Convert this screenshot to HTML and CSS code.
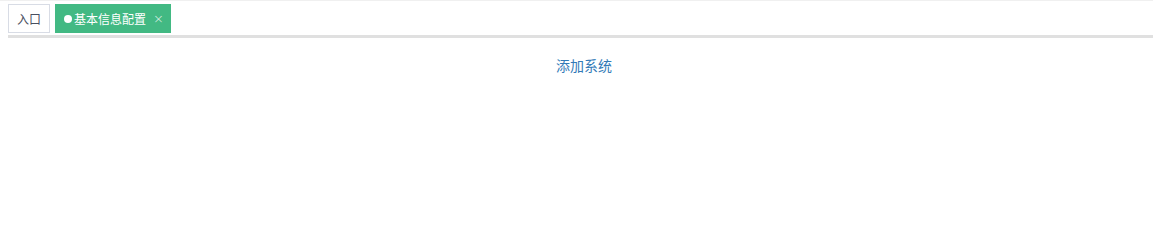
FILE: index.html
```html
<!DOCTYPE html>
<html lang="zh">
  <head>
    <meta charset="UTF-8" />
    <link rel="stylesheet" href="styles.css">
  </head>
  <body>
    <div class="tabs-bar">
      <div class="tabs">
        <span class="tab">入口</span>
        <span class="tab active"><i class="dot"></i>基本信息配置<span class="close">×</span></span>
      </div>
    </div>
    <div class="content">
      <a class="add-link">添加系统</a>
    </div>
  </body>
</html>
```

FILE: styles.css
```css
* {
  box-sizing: border-box;
}

body {
  margin: 0;
  font-family: "Liberation Sans", "Noto Sans CJK SC", sans-serif;
  background: #fff;
}

.tabs-bar {
  border-top: 1px solid #f0f0f0;
  padding: 3px 0 0 8px;
}

.tabs {
  display: flex;
  gap: 5px;
  height: 34px;
  padding-bottom: 2px;
  border-bottom: 3px solid #e0e0e0;
}

.tab {
  display: flex;
  align-items: center;
  height: 29px;
  padding: 0 8px;
  border: 1px solid #d8dce5;
  font-size: 12px;
  color: #495060;
  background: #fff;
}

.tab.active {
  background: #42b983;
  border-color: #42b983;
  color: #fff;
  padding-right: 6px;
}

.dot {
  display: inline-block;
  width: 8px;
  height: 8px;
  border-radius: 50%;
  background: #fff;
  margin-right: 2px;
}

.close {
  margin-left: 7px;
  font-family: "DejaVu Sans", sans-serif;
  font-size: 13px;
  font-weight: 200;
  opacity: 0.85;
}

.content {
  display: flex;
  justify-content: center;
  padding: 17px 0 0 15px;
}

.add-link {
  color: #337ab7;
  font-size: 14px;
}
```
